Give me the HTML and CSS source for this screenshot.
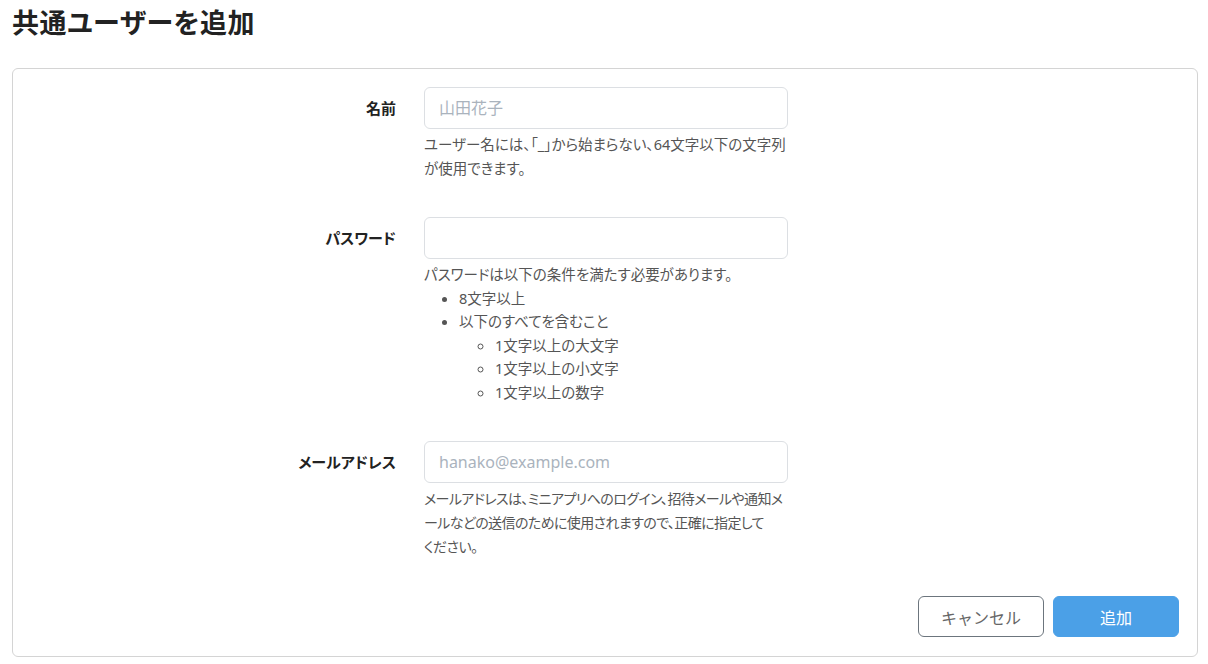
FILE: index.html
```html
<!DOCTYPE html>
<html lang="ja">
<head>
<meta charset="utf-8">
<link rel="stylesheet" href="styles.css">
</head>
<body>
<h1 class="title">共通ユーザーを追加</h1>
<form class="card">
  <div class="row">
    <label class="label">名前</label>
    <div class="field">
      <div class="input placeholder">山田花子</div>
      <div class="help">
        <span class="line">ユーザー名には、「_」から始まらない、64文字以下の文字列</span>
        <span class="line">が使用できます。</span>
      </div>
    </div>
  </div>
  <div class="row">
    <label class="label">パスワード</label>
    <div class="field">
      <div class="input"></div>
      <div class="help">
        <span class="line">パスワードは以下の条件を満たす必要があります。</span>
        <ul class="list">
          <li>8文字以上</li>
          <li>以下のすべてを含むこと
            <ul class="sublist">
              <li>1文字以上の大文字</li>
              <li>1文字以上の小文字</li>
              <li>1文字以上の数字</li>
            </ul>
          </li>
        </ul>
      </div>
    </div>
  </div>
  <div class="row">
    <label class="label">メールアドレス</label>
    <div class="field">
      <div class="input placeholder latin">hanako@example.com</div>
      <div class="help help-tight">
        <span class="line">メールアドレスは、ミニアプリへのログイン、招待メールや通知メ</span>
        <span class="line">ールなどの送信のために使用されますので、正確に指定して</span>
        <span class="line">ください。</span>
      </div>
    </div>
  </div>
  <div class="actions">
    <button type="button" class="btn btn-cancel">キャンセル</button>
    <button type="button" class="btn btn-primary">追加</button>
  </div>
</form>
</body>
</html>
```
FILE: styles.css
```css
html, body {
  margin: 0;
  padding: 0;
  background: #ffffff;
}
body {
  font-family: "Noto Sans", "Noto Sans CJK JP", sans-serif;
  color: #222;
  padding: 0 10px 0 12px;
  font-feature-settings: "palt";
}
.title {
  margin: 0;
  padding-top: 4px;
  height: 68px;
  box-sizing: border-box;
  font-size: 27px;
  font-weight: 700;
  line-height: 38px;
  color: #222;
  letter-spacing: 0.5px;
}
.card {
  border: 1px solid #d4d4d4;
  border-radius: 6px;
  padding: 18px 18px 19px 0;
  display: flex;
  flex-direction: column;
  gap: 37px;
}
.row {
  display: grid;
  grid-template-columns: 383px 364px;
  column-gap: 28px;
  align-items: start;
}
.label {
  text-align: right;
  font-size: 15px;
  font-weight: 700;
  line-height: 42px;
  height: 42px;
  color: #222;
}
.field {
  display: flex;
  flex-direction: column;
}
.input {
  height: 42px;
  box-sizing: border-box;
  border: 1px solid #dcdfe3;
  border-radius: 6px;
  padding: 0 14px;
  font-size: 16px;
  line-height: 40px;
  color: #333;
}
.placeholder {
  color: #aab3bd;
}
.help {
  margin-top: 4px;
  font-size: 14.5px;
  line-height: 23.5px;
  color: #555;
}
.help-tight {
  font-size: 14px;
  letter-spacing: -0.6px;
  line-height: 24px;
}
.line {
  display: block;
  white-space: nowrap;
}
.list {
  margin: 0;
  padding-left: 35px;
  list-style: disc;
}
.sublist {
  margin: 0;
  padding-left: 36px;
  list-style: circle;
}
.actions {
  display: flex;
  justify-content: flex-end;
  gap: 9px;
}
.btn {
  width: 126px;
  height: 41px;
  border-radius: 6px;
  font-family: "Noto Sans", "Noto Sans CJK JP", sans-serif;
  font-size: 16px;
  cursor: pointer;
}
.btn-cancel {
  background: #fff;
  border: 1px solid #6c757d;
  color: #666;
}
.btn-primary {
  background: #4ba0e7;
  border: 1px solid #4ba0e7;
  color: #fff;
}
```
